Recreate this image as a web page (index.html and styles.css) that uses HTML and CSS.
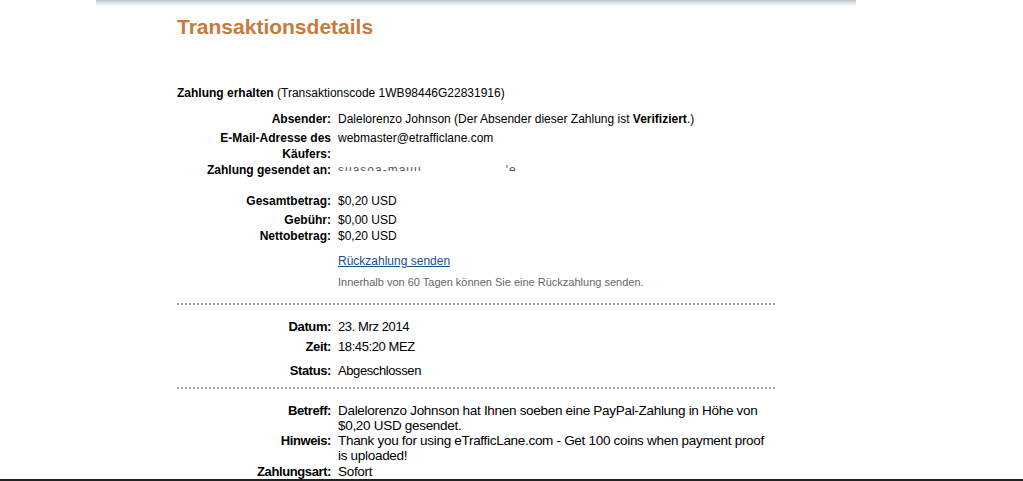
FILE: index.html
```html
<!doctype html>
<html>
<head>
<meta http-equiv="Content-Type" content="text/html; charset=utf-8"/>
<title>Transaktionsdetails</title>
<link rel="stylesheet" href="styles.css">
</head>

<body>
<div class="page">
	<div class="topbar"></div>
	<div class="content">
		<h1 class="title">Transaktionsdetails</h1>

		<p class="intro"><b>Zahlung erhalten</b> (Transaktionscode 1WB98446G22831916)</p>

		<div class="row m10"><span class="lbl">Absender:</span><span class="val">Dalelorenzo Johnson (Der Absender dieser Zahlung ist <b>Verifiziert</b>.)</span></div>
		<div class="row m3"><span class="lbl">E-Mail-Adresse des Käufers:</span><span class="val">webmaster@etrafficlane.com</span></div>
		<div class="row"><span class="lbl">Zahlung gesendet an:</span><span class="val"><span class="masked">suasoa-mauu</span><span class="masked gap">'e</span></span></div>

		<div class="row m15"><span class="lbl">Gesamtbetrag:</span><span class="val">$0,20 USD</span></div>
		<div class="row m3"><span class="lbl">Gebühr:</span><span class="val">$0,00 USD</span></div>
		<div class="row"><span class="lbl">Nettobetrag:</span><span class="val">$0,20 USD</span></div>
		<div class="row m9"><span class="lbl"></span><span class="val"><a href="#" class="link">Rückzahlung senden</a></span></div>
		<div class="row m5"><span class="lbl"></span><span class="val note">Innerhalb von 60 Tagen können Sie eine Rückzahlung senden.</span></div>

		<div class="dots m13"></div>

		<div class="narrow">
			<div class="row m14"><span class="lbl">Datum:</span><span class="val">23. Mrz 2014</span></div>
			<div class="row m4"><span class="lbl">Zeit:</span><span class="val">18:45:20 MEZ</span></div>
			<div class="row m8"><span class="lbl">Status:</span><span class="val">Abgeschlossen</span></div>
		</div>

		<div class="dots m8"></div>

		<div class="narrow tight">
			<div class="row m14"><span class="lbl">Betreff:</span><span class="val">Dalelorenzo Johnson hat Ihnen soeben eine PayPal-Zahlung in Höhe von<br>$0,20 USD gesendet.</span></div>
			<div class="row"><span class="lbl">Hinweis:</span><span class="val">Thank you for using eTrafficLane.com - Get 100 coins when payment proof<br>is uploaded!</span></div>
			<div class="row m1"><span class="lbl">Zahlungsart:</span><span class="val">Sofort</span></div>
		</div>
	</div>
</div>
</body>
</html>
```

FILE: styles.css
```css
*{ margin:0; padding:0;}
body{ font-family:"Liberation Sans", Arial, sans-serif; font-size:12px; color:#000; background:#fff; overflow:hidden;}
.page{ height:479px; overflow:hidden; border-bottom:2px solid #222;}
.topbar{ width:760px; height:6px; margin-left:96px; background:linear-gradient(#c6cace 0, #c6cace 1px, #d7dde6 2px, #e6ebf2 4px, #f6f8fb 6px);}
.content{ margin-left:177px; width:598px;}
.title{ font-size:21px; line-height:24px; font-weight:bold; color:#c77a3c; margin-top:9px;}
.intro{ line-height:16px; margin-top:46px;}
.row{ display:grid; grid-template-columns:154px 1fr; column-gap:7px; line-height:16px;}
.lbl{ font-weight:bold; text-align:right;}
.m1{ margin-top:1px;}
.m3{ margin-top:3px;}
.m4{ margin-top:4px;}
.m5{ margin-top:5px;}
.m8{ margin-top:8px;}
.m9{ margin-top:9px;}
.m10{ margin-top:10px;}
.m13{ margin-top:13px;}
.m14{ margin-top:14px;}
.m15{ margin-top:15px;}
.masked{ display:inline-block; color:#555; letter-spacing:1px; clip-path:inset(0 0 7px 0);}
.masked.gap{ margin-left:84px;}
.link{ color:#1a4d8f; text-decoration:underline;}
.note{ font-size:11px; color:#666;}
.dots{ height:2px; background:linear-gradient(to right, #9a9a9a 50%, transparent 50%); background-size:4px 2px;}
.narrow .row{ font-size:13px; letter-spacing:-0.4px;}
.narrow .lbl{ font-size:13px; letter-spacing:-0.4px;}
.narrow .val{ white-space:nowrap;}
.narrow.tight .row{ font-size:13.5px; letter-spacing:-0.3px; line-height:15px;}
.narrow.tight .lbl{ font-size:13px; letter-spacing:-0.4px;}
```
